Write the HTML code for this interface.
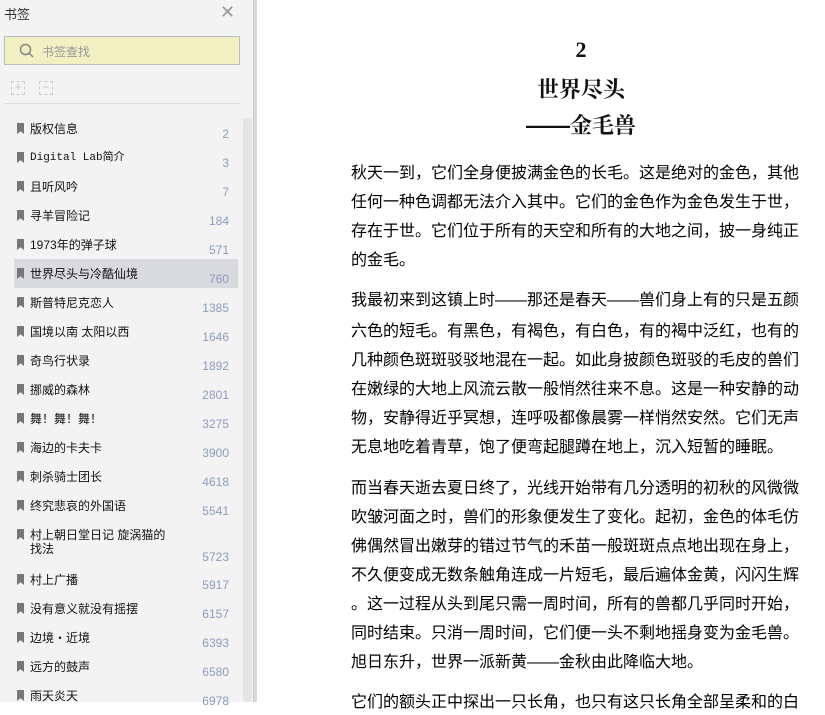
<!DOCTYPE html>
<html><head><meta charset="utf-8"><style>
*{margin:0;padding:0;box-sizing:border-box}
body{width:825px;height:702px;overflow:hidden;background:#fff;font-family:"Liberation Sans","Noto Sans CJK SC",sans-serif;position:relative}
#side{position:absolute;left:0;top:0;width:253px;height:702px;background:#f3f3f3}
#bord{position:absolute;left:253px;top:0;width:4px;height:702px;background:#d8d8d8;border-left:1px solid #c8c8c8}
.hd{position:absolute;left:4px;top:4px;font-size:13px;color:#333}
.x{position:absolute;left:220px;top:2px;font-size:18px;color:#999}
.search{position:absolute;left:4px;top:36px;width:236px;height:29px;background:#f0f0c2;border:1px solid #b9bec6}
.search span{position:absolute;left:37px;top:6px;font-size:12px;color:#999}
.icn{position:absolute;top:81px;width:14px;height:14px;border:1px dashed #ccc;color:#ccc;font-size:12px;line-height:11px;text-align:center}
.sep{position:absolute;left:4px;top:103px;width:236px;height:1px;background:#ddd}
.sb{position:absolute;left:243px;top:118px;width:9px;height:584px;background:#e4e4e4;border-radius:4px}
.row{position:absolute;left:14px;width:224px;height:29px}
.row.sel{background:#d9dadd}
.bm{position:absolute;left:3px;top:9px;width:7px;height:11px;background:#777;clip-path:polygon(0 0,100% 0,100% 100%,50% 75%,0 100%)}
.t{position:absolute;left:16px;top:8px;font-size:12px;color:#111;line-height:14px;white-space:nowrap}
.n{position:absolute;right:9px;top:13px;font-size:12px;color:#8c9bbd}
#main{position:absolute;left:351px;top:0;width:460px}
.ti{position:absolute;left:0;width:460px;text-align:center;font-family:"Liberation Serif","Noto Serif CJK SC",serif;font-weight:bold;font-size:22px;color:#111}
.p{position:absolute;left:0;font-size:16px;line-height:29px;color:#000;white-space:nowrap;font-family:"Noto Sans CJK SC",sans-serif}
.d{font-family:"WenQuanYi Zen Hei",sans-serif}
</style></head><body>
<div id="side">
<div class="hd">书签</div><div class="x">✕</div>
<div class="search"><svg style="position:absolute;left:14px;top:6px" width="16" height="16"><circle cx="6.5" cy="6.5" r="5" fill="none" stroke="#888" stroke-width="1.5"/><line x1="10" y1="10" x2="14" y2="14" stroke="#888" stroke-width="1.5"/></svg><span>书签查找</span></div>
<div class="icn" style="left:11px">+</div><div class="icn" style="left:39px">−</div>
<div class="sep"></div>
<div class="sb"></div>
<div class="row" style="top:114px"><i class="bm"></i><span class="t">版权信息</span><span class="n">2</span></div>
<div class="row" style="top:143px"><i class="bm"></i><span class="t" style="font-family:'Liberation Mono','Noto Sans CJK SC',monospace;font-size:11px">Digital Lab简介</span><span class="n">3</span></div>
<div class="row" style="top:172px"><i class="bm"></i><span class="t">且听风吟</span><span class="n">7</span></div>
<div class="row" style="top:201px"><i class="bm"></i><span class="t">寻羊冒险记</span><span class="n">184</span></div>
<div class="row" style="top:230px"><i class="bm"></i><span class="t">1973年的弹子球</span><span class="n">571</span></div>
<div class="row sel" style="top:259px"><i class="bm"></i><span class="t">世界尽头与冷酷仙境</span><span class="n">760</span></div>
<div class="row" style="top:288px"><i class="bm"></i><span class="t">斯普特尼克恋人</span><span class="n">1385</span></div>
<div class="row" style="top:317px"><i class="bm"></i><span class="t">国境以南 太阳以西</span><span class="n">1646</span></div>
<div class="row" style="top:346px"><i class="bm"></i><span class="t">奇鸟行状录</span><span class="n">1892</span></div>
<div class="row" style="top:375px"><i class="bm"></i><span class="t">挪威的森林</span><span class="n">2801</span></div>
<div class="row" style="top:404px"><i class="bm"></i><span class="t">舞！舞！舞！</span><span class="n">3275</span></div>
<div class="row" style="top:433px"><i class="bm"></i><span class="t">海边的卡夫卡</span><span class="n">3900</span></div>
<div class="row" style="top:462px"><i class="bm"></i><span class="t">刺杀骑士团长</span><span class="n">4618</span></div>
<div class="row" style="top:491px"><i class="bm"></i><span class="t">终究悲哀的外国语</span><span class="n">5541</span></div>
<div class="row" style="top:520px;height:45px"><i class="bm"></i><span class="t">村上朝日堂日记 旋涡猫的<br>找法</span><span class="n" style="top:30px">5723</span></div>
<div class="row" style="top:565px"><i class="bm"></i><span class="t">村上广播</span><span class="n">5917</span></div>
<div class="row" style="top:594px"><i class="bm"></i><span class="t">没有意义就没有摇摆</span><span class="n">6157</span></div>
<div class="row" style="top:623px"><i class="bm"></i><span class="t">边境・近境</span><span class="n">6393</span></div>
<div class="row" style="top:652px"><i class="bm"></i><span class="t">远方的鼓声</span><span class="n">6580</span></div>
<div class="row" style="top:681px"><i class="bm"></i><span class="t">雨天炎天</span><span class="n">6978</span></div>
</div>
<div id="bord"></div>
<div id="main">
<div class="ti" style="top:37px">2</div>
<div class="ti" style="top:73px">世界尽头</div>
<div class="ti" style="top:109px"><span class="d">——</span>金毛兽</div>
<div class="p" style="top:157px">秋天一到，它们全身便披满金色的长毛。这是绝对的金色，其他<br>任何一种色调都无法介入其中。它们的金色作为金色发生于世，<br>存在于世。它们位于所有的天空和所有的大地之间，披一身纯正<br>的金毛。</div>
<div class="p" style="top:284px">我最初来到这镇上时<span class="d">——</span>那还是春天<span class="d">——</span>兽们身上有的只是五颜<br>六色的短毛。有黑色，有褐色，有白色，有的褐中泛红，也有的<br>几种颜色斑斑驳驳地混在一起。如此身披颜色斑驳的毛皮的兽们<br>在嫩绿的大地上风流云散一般悄然往来不息。这是一种安静的动<br>物，安静得近乎冥想，连呼吸都像晨雾一样悄然安然。它们无声<br>无息地吃着青草，饱了便弯起腿蹲在地上，沉入短暂的睡眠。</div>
<div class="p" style="top:472px">而当春天逝去夏日终了，光线开始带有几分透明的初秋的风微微<br>吹皱河面之时，兽们的形象便发生了变化。起初，金色的体毛仿<br>佛偶然冒出嫩芽的错过节气的禾苗一般斑斑点点地出现在身上，<br>不久便变成无数条触角连成一片短毛，最后遍体金黄，闪闪生辉<br>。这一过程从头到尾只需一周时间，所有的兽都几乎同时开始，<br>同时结束。只消一周时间，它们便一头不剩地摇身变为金毛兽。<br>旭日东升，世界一派新黄<span class="d">——</span>金秋由此降临大地。</div>
<div class="p" style="top:686px">它们的额头正中探出一只长角，也只有这只长角全部呈柔和的白</div>
</div>
</body></html>
